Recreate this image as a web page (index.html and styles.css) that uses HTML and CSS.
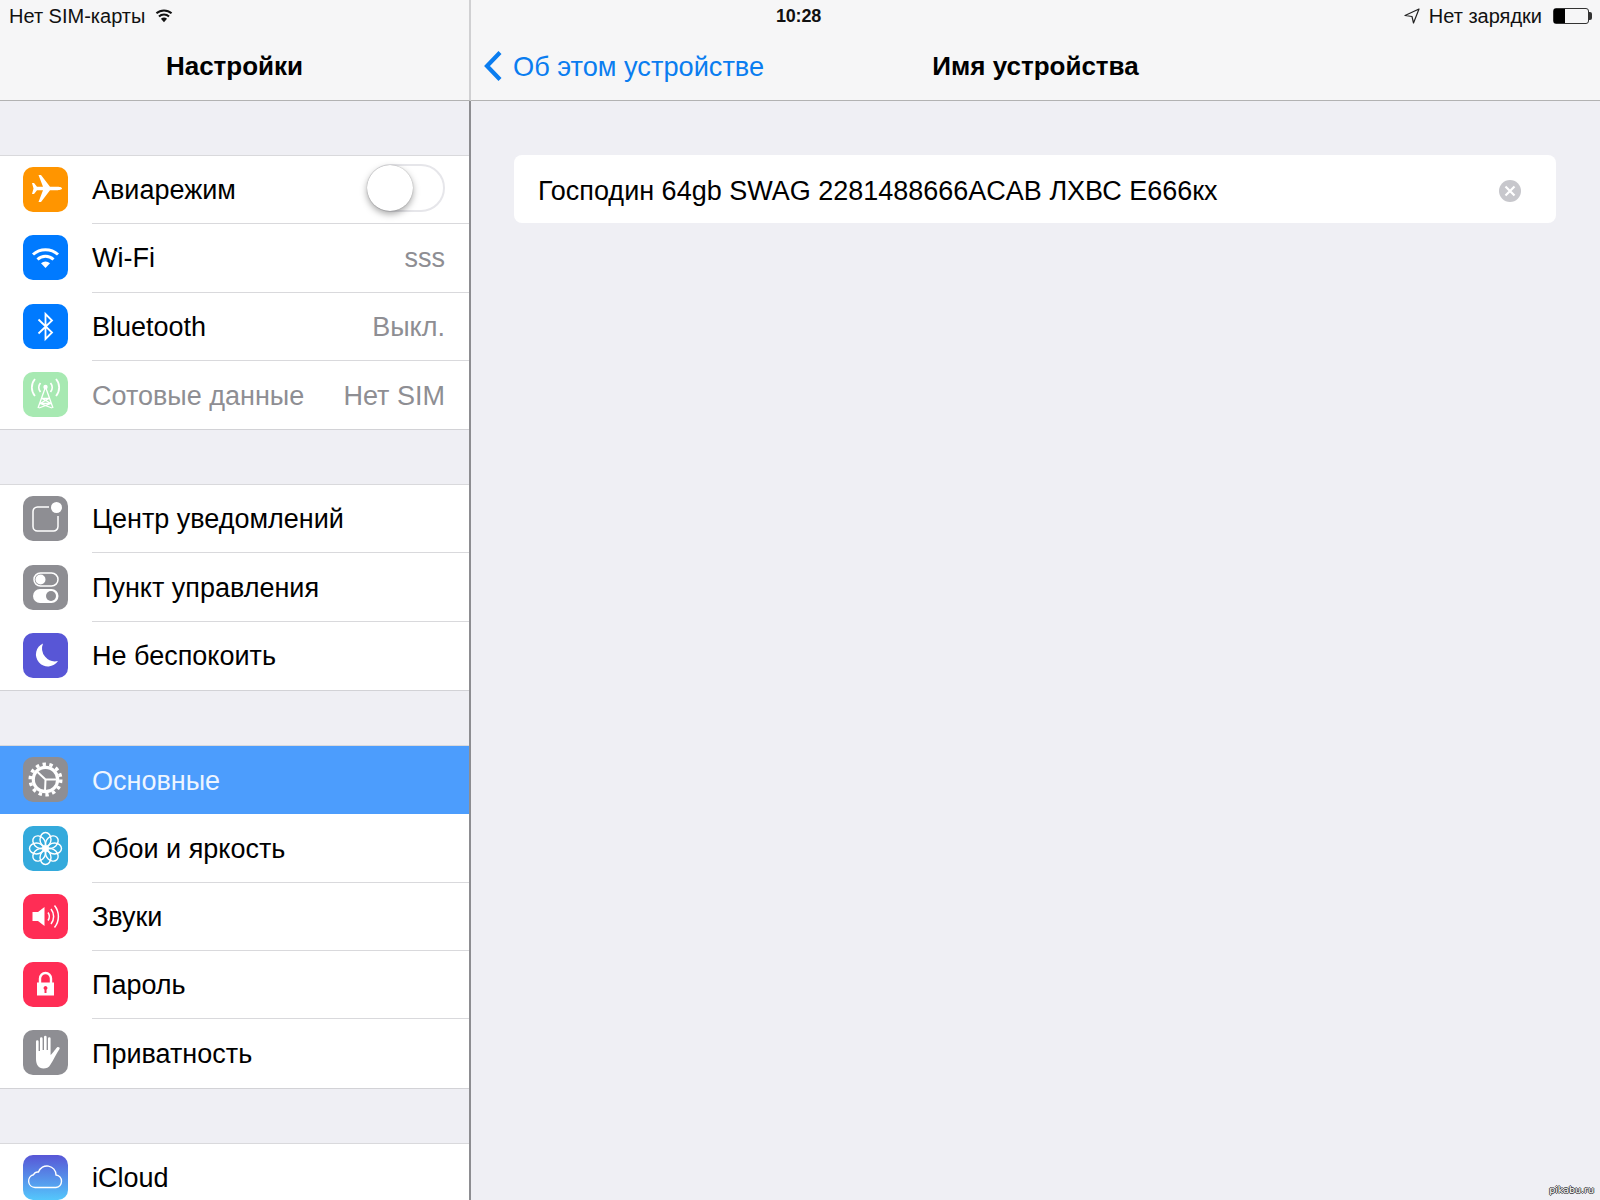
FILE: index.html
```html
<!DOCTYPE html>
<html lang="ru">
<head>
  <meta charset="UTF-8">
  <title>Настройки</title>
  <link rel="stylesheet" href="styles.css">
</head>
<body>
  <div class="screen">
    <div class="status-bar">
      <div class="status-left">
        <span>Нет SIM-карты</span>
        <svg class="status-wifi" viewBox="0 0 20 16"><path d="M10 15.5 6.6 11.7a5 5 0 0 1 6.8 0Z" fill="#111"/><path d="M4.4 9.2a8 8 0 0 1 11.2 0M1.6 5.6a12.4 12.4 0 0 1 16.8 0" fill="none" stroke="#111" stroke-width="2.2"/></svg>
      </div>
      <div class="status-time">10:28</div>
      <div class="status-right">
        <svg class="status-arrow" viewBox="0 0 16 16"><path d="M15 1 1 7.5l7 1 1.5 6.5Z" fill="none" stroke="#222" stroke-width="1.2" stroke-linejoin="round"/></svg>
        <span>Нет зарядки</span>
        <div class="battery"><div class="battery-level"></div></div>
      </div>
    </div>

    <div class="sidebar">
      <div class="nav-bar nav-center"><h1 class="nav-title">Настройки</h1></div>

      <div class="group">
        <div class="row">
          <svg class="icon" viewBox="0 0 45 45"><rect width="45" height="45" rx="10" fill="#ff9500"/><path d="M39 21.5C39 20.2 36 19.800 34 19.800H27L18 8H15.500L20 19.800H14L11 16H9L10.500 21.500 9 27H11L14 23.200H20L15.500 35H18L27 23.200H34C36 23.200 39 22.800 39 21.500Z" fill="#fff"/></svg>
          <div class="row-body">
            <span class="row-label">Авиарежим</span>
            <div class="toggle"><div class="toggle-knob"></div></div>
          </div>
        </div>
        <div class="row">
          <svg class="icon" viewBox="0 0 45 45"><rect width="45" height="45" rx="10" fill="#007aff"/><path d="M22.500 33 18 28.200a7 7 0 0 1 9 0Z" fill="#fff"/><path d="M14.500 24.500a11.500 11.500 0 0 1 16 0M10 19.500a18.500 18.500 0 0 1 25 0" fill="none" stroke="#fff" stroke-width="3"/></svg>
          <div class="row-body">
            <span class="row-label">Wi-Fi</span>
            <span class="row-value">sss</span>
          </div>
        </div>
        <div class="row">
          <svg class="icon" viewBox="0 0 45 45"><rect width="45" height="45" rx="10" fill="#007aff"/><path d="M15.500 15.500 29 28.500 22.500 35V10L29 16.500 15.500 29.500" fill="none" stroke="#fff" stroke-width="1.800"/></svg>
          <div class="row-body">
            <span class="row-label">Bluetooth</span>
            <span class="row-value">Выкл.</span>
          </div>
        </div>
        <div class="row">
          <svg class="icon" viewBox="0 0 45 45"><rect width="45" height="45" rx="10" fill="#a7e9b2"/><g fill="none" stroke="#fff" stroke-width="1.300"><path d="M22.500 15 15 36M22.500 15 30 36M19 26.500H26M17 31.500H28M17 31.500 29 36M28 31.500 16 36M19 26.500 28 31.500M26 26.500 17 31.500"/><path d="M17.500 20a7 7 0 0 1 0-9M27.500 11a7 7 0 0 1 0 9M12 24a13 13 0 0 1 0-17M33 7a13 13 0 0 1 0 17" stroke-width="1.800"/></g><circle cx="22.500" cy="15" r="2.200" fill="#fff"/></svg>
          <div class="row-body">
            <span class="row-label row-label-off">Сотовые данные</span>
            <span class="row-value">Нет SIM</span>
          </div>
        </div>
      </div>

      <div class="group">
        <div class="row">
          <svg class="icon" viewBox="0 0 45 45"><rect width="45" height="45" rx="10" fill="#8e8e93"/><path d="M26 11H14.500A4.500 4.500 0 0 0 10 15.500V30.500A4.500 4.500 0 0 0 14.500 35H30A4.500 4.500 0 0 0 35 30.500V20" fill="none" stroke="#fff" stroke-width="1.500"/><circle cx="33.500" cy="11.500" r="5.500" fill="#fff"/></svg>
          <div class="row-body"><span class="row-label">Центр уведомлений</span></div>
        </div>
        <div class="row">
          <svg class="icon" viewBox="0 0 45 45"><rect width="45" height="45" rx="10" fill="#8e8e93"/><rect x="11" y="8" width="24" height="13" rx="6.500" fill="none" stroke="#fff" stroke-width="1.500"/><circle cx="17.500" cy="14.500" r="5" fill="#fff"/><rect x="10" y="24" width="25.500" height="14" rx="7" fill="#fff"/><circle cx="28" cy="31" r="5" fill="#8e8e93"/></svg>
          <div class="row-body"><span class="row-label">Пункт управления</span></div>
        </div>
        <div class="row">
          <svg class="icon" viewBox="0 0 45 45"><rect width="45" height="45" rx="10" fill="#5856d6"/><path d="M20 10.500A12 12 0 1 0 35 28 13 13 0 0 1 20 10.500Z" fill="#fff"/></svg>
          <div class="row-body"><span class="row-label">Не беспокоить</span></div>
        </div>
      </div>

      <div class="group">
        <div class="row row-selected">
          <svg class="icon" viewBox="0 0 45 45"><rect width="45" height="45" rx="10" fill="#8e8e93"/><circle cx="22.500" cy="22.500" r="15.300" fill="none" stroke="#fff" stroke-width="3.400" stroke-dasharray="3.400 3.467"/><circle cx="22.500" cy="22.500" r="12.200" fill="none" stroke="#fff" stroke-width="3.200"/><path d="M22.500 22.500 14.500 15M22.500 22.500H33M22.500 22.500 22 34" fill="none" stroke="#fff" stroke-width="2"/></svg>
          <div class="row-body"><span class="row-label">Основные</span></div>
        </div>
        <div class="row">
          <svg class="icon" viewBox="0 0 45 45"><rect width="45" height="45" rx="10" fill="#34aadc"/><g fill="none" stroke="#fff" stroke-width="1.400"><ellipse cx="22.500" cy="13.500" rx="5.500" ry="7"/><ellipse cx="22.500" cy="13.500" rx="5.500" ry="7" transform="rotate(45 22.500 22.500)"/><ellipse cx="22.500" cy="13.500" rx="5.500" ry="7" transform="rotate(90 22.500 22.500)"/><ellipse cx="22.500" cy="13.500" rx="5.500" ry="7" transform="rotate(135 22.500 22.500)"/><ellipse cx="22.500" cy="13.500" rx="5.500" ry="7" transform="rotate(180 22.500 22.500)"/><ellipse cx="22.500" cy="13.500" rx="5.500" ry="7" transform="rotate(225 22.500 22.500)"/><ellipse cx="22.500" cy="13.500" rx="5.500" ry="7" transform="rotate(270 22.500 22.500)"/><ellipse cx="22.500" cy="13.500" rx="5.500" ry="7" transform="rotate(315 22.500 22.500)"/></g><circle cx="22.500" cy="22.500" r="2.800" fill="#fff"/></svg>
          <div class="row-body"><span class="row-label">Обои и яркость</span></div>
        </div>
        <div class="row">
          <svg class="icon" viewBox="0 0 45 45"><rect width="45" height="45" rx="10" fill="#ff2d55"/><path d="M9.500 18H15L21.500 13V32L15 27H9.500Z" fill="#fff"/><path d="M25 18.500a7 7 0 0 1 0 8M28 15a12 12 0 0 1 0 15M31.500 11.500a17.500 17.500 0 0 1 0 22" fill="none" stroke="#fff" stroke-width="1.500"/></svg>
          <div class="row-body"><span class="row-label">Звуки</span></div>
        </div>
        <div class="row">
          <svg class="icon" viewBox="0 0 45 45"><rect width="45" height="45" rx="10" fill="#ff2d55"/><path d="M17 22V16.500a5.500 5.500 0 0 1 11 0V22" fill="none" stroke="#fff" stroke-width="2.400"/><path d="M14 20.500H31V33.500H14ZM22.500 24a2 2 0 0 0-1 3.700V31H23.500V27.700A2 2 0 0 0 22.500 24Z" fill="#fff" fill-rule="evenodd"/></svg>
          <div class="row-body"><span class="row-label">Пароль</span></div>
        </div>
        <div class="row">
          <svg class="icon" viewBox="0 0 45 45"><rect width="45" height="45" rx="10" fill="#8e8e93"/><path d="M13 11.500a1.300 1.300 0 0 1 2.600 0V21H17V8.500a1.300 1.300 0 0 1 2.600 0V20H21V7a1.300 1.300 0 0 1 2.600 0V20H25V8.500a1.300 1.300 0 0 1 2.600 0V25C29 24 32 19.500 34 17.500 35 16.500 37.500 17.500 36.500 19 33 24 30.500 30 27.500 34.500 26 37.500 23 38.500 20.500 38.500 15.500 38.500 13 34.500 13 29Z" fill="#fff"/></svg>
          <div class="row-body"><span class="row-label">Приватность</span></div>
        </div>
      </div>

      <div class="group">
        <div class="row">
          <svg class="icon" viewBox="0 0 45 45"><defs><linearGradient id="cloud-bg" x1="0" y1="0" x2="0" y2="1"><stop offset="0" stop-color="#5856d6"/><stop offset="1" stop-color="#54c7fc"/></linearGradient></defs><rect width="45" height="45" rx="10" fill="url(#cloud-bg)"/><path d="M12 32.500A6.500 6.500 0 0 1 10.500 19.700 5 5 0 0 1 15.500 17 9 9 0 0 1 33 20 6.300 6.300 0 0 1 33 32.500Z" fill="none" stroke="#fff" stroke-width="1.400"/></svg>
          <div class="row-body"><span class="row-label">iCloud</span></div>
        </div>
      </div>
    </div>

    <div class="detail">
      <div class="nav-bar nav-center">
        <a class="nav-back">
          <svg class="nav-chevron" viewBox="0 0 20 32"><path d="M17 2.500 4 16 17 29.500" fill="none" stroke="#0a7df0" stroke-width="4.200"/></svg>
          <span>Об этом устройстве</span>
        </a>
        <h1 class="nav-title">Имя устройства</h1>
      </div>
      <div class="detail-body">
        <div class="name-field">
          <span class="name-text">Господин 64gb SWAG 2281488666ACAB ЛХВС Е666кх</span>
          <svg class="clear-icon" viewBox="0 0 22 22"><circle cx="11" cy="11" r="11" fill="#c7c7cc"/><path d="M6.500 6.500 15.500 15.500M15.500 6.500 6.500 15.500" stroke="#fff" stroke-width="2.200"/></svg>
        </div>
      </div>
    </div>

    <div class="watermark">pikabu.ru</div>
  </div>
</body>
</html>
```

FILE: styles.css
```css
* {
  box-sizing: border-box;
}

body {
  margin: 0;
  font-family: "Liberation Sans", Arial, sans-serif;
  color: #000;
  background-color: #efeff4;
}

.screen {
  position: relative;
  display: flex;
  width: 1600px;
  height: 1200px;
  overflow: hidden;
}

/* status bar lies over both nav bars */
.status-bar {
  position: absolute;
  z-index: 1;
  top: 0;
  left: 0;
  width: 100%;
  height: 32px;
  padding: 0 9px 0 9px;
  display: grid;
  grid-template-columns: 1fr auto 1fr;
  align-items: center;
  font-size: 20px;
  color: #111;
}

.status-left {
  display: flex;
  align-items: center;
  gap: 10px;
}

.status-wifi {
  width: 18px;
  height: 15px;
  margin-top: -2px;
}

.status-time {
  font-size: 18px;
  font-weight: bold;
  letter-spacing: -0.2px;
  margin-right: 3px;
}

.status-right {
  display: flex;
  align-items: center;
  justify-content: flex-end;
}

.status-arrow {
  width: 16px;
  height: 16px;
  margin-right: 9px;
}

.battery {
  position: relative;
  width: 36px;
  height: 16px;
  margin-left: 11px;
  margin-right: 2px;
  border: 1px solid #333;
  border-radius: 3px;
  overflow: visible;
}

.battery::after {
  content: "";
  position: absolute;
  top: 3px;
  right: -4px;
  width: 3px;
  height: 8px;
  border-radius: 0 2px 2px 0;
  background-color: #333;
}

.battery-level {
  width: 11px;
  height: 100%;
  background-color: #000;
}

.sidebar {
  width: 471px;
  flex-shrink: 0;
  border-right: 2px solid #8d8d91;
}

.sidebar .nav-bar {
  margin-right: -2px;
  border-right: 2px solid #d0d0d2;
}

.detail {
  flex: 1;
}

.nav-bar {
  position: relative;
  height: 101px;
  padding-top: 33px;
  background-color: #f6f6f7;
  border-bottom: 1px solid #b2b2b2;
}

.nav-center {
  display: flex;
  justify-content: center;
  align-items: center;
}

.nav-title {
  margin: 0;
  font-size: 26px;
  font-weight: bold;
}

.nav-back {
  position: absolute;
  top: 50px;
  left: 12px;
  display: flex;
  align-items: center;
  gap: 10px;
  font-size: 27.2px;
  line-height: 31px;
  color: #0a7df0;
}

.nav-chevron {
  width: 20px;
  height: 32px;
}

.group {
  margin-top: 54px;
  background-color: #fff;
  border-top: 1px solid #d9d9dc;
  border-bottom: 1px solid #d2d2d6;
}

.row {
  display: flex;
  align-items: center;
  gap: 24px;
  height: 68.3px;
  padding-left: 23px;
}

.icon {
  width: 45px;
  height: 45px;
  flex-shrink: 0;
  margin-bottom: 1px;
}

.row-body {
  flex: 1;
  height: 100%;
  display: flex;
  align-items: center;
  justify-content: space-between;
  padding-right: 24px;
  border-bottom: 1px solid #d9d9dc;
}

.row:last-child .row-body {
  border-bottom: none;
}

.row-label {
  font-size: 27px;
  padding-top: 2px;
}

.row-label-off {
  color: #8e8e93;
}

.row-value {
  font-size: 27px;
  padding-top: 2px;
  color: #8e8e93;
}

.row-selected {
  background-color: #4c9dfd;
}

.row-selected .row-label {
  color: #eef5ff;
}

.row-selected .row-body {
  border-bottom: none;
}

.toggle {
  display: flex;
  align-items: center;
  width: 78px;
  height: 48px;
  margin-bottom: 3px;
  border: 2px solid #e6e6ea;
  border-radius: 24px;
}

.toggle-knob {
  width: 46px;
  height: 46px;
  margin-left: -2px;
  border-radius: 50%;
  background-color: #fff;
  box-shadow: 0 3px 7px rgba(0, 0, 0, 0.35), 0 0 1px rgba(0, 0, 0, 0.4);
}

.detail-body {
  padding: 54px 44px 0 43px;
}

.name-field {
  display: flex;
  align-items: center;
  justify-content: space-between;
  height: 68px;
  padding: 0 35px 0 24px;
  background-color: #fff;
  border-radius: 8px;
}

.name-text {
  font-size: 27px;
  padding-top: 5px;
}

.clear-icon {
  width: 22px;
  height: 22px;
  margin-top: 3px;
}

.watermark {
  position: absolute;
  right: 6px;
  bottom: 5px;
  font-family: "DejaVu Sans", sans-serif;
  font-size: 9.5px;
  color: #fff;
  text-shadow: 1px 0 0 #444, -1px 0 0 #444, 0 1px 0 #444, 0 -1px 0 #444;
}
```
